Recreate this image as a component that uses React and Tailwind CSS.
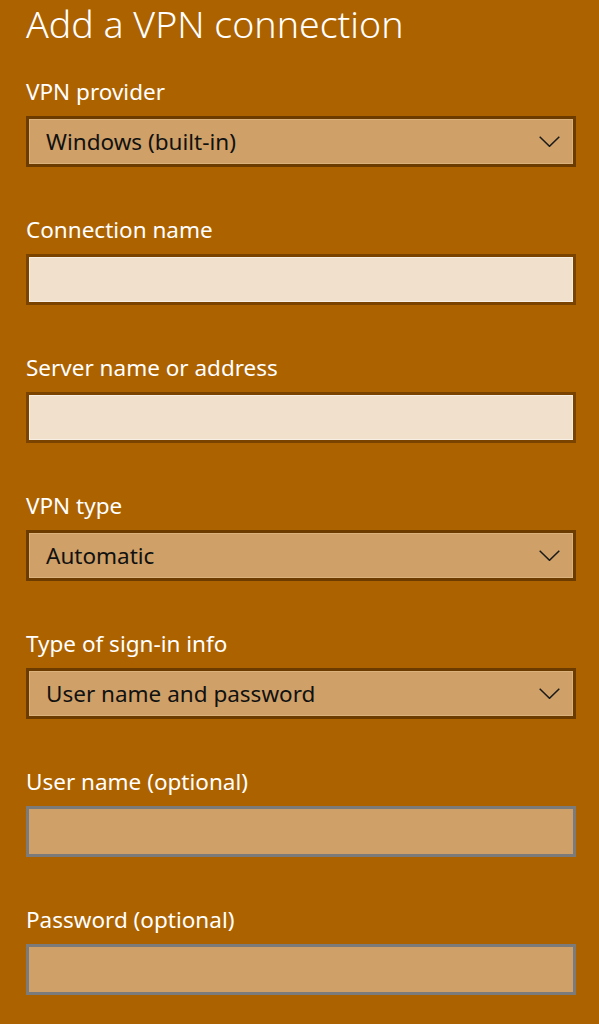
import React from 'react';

const FONT = { fontFamily: '"Noto Sans", "Open Sans", sans-serif' };

function Chevron() {
  return (
    <svg width="21" height="11" viewBox="0 0 21 11" fill="none" className="shrink-0">
      <polyline points="0.7,0.7 10.5,10.3 20.3,0.7" stroke="#1a1a1a" strokeWidth="1.5" />
    </svg>
  );
}

function Label({ children }) {
  return <div className="text-[22.5px] leading-[28px] text-white mb-[10px]">{children}</div>;
}

function Select({ label, value }) {
  return (
    <div className="mb-[49px]">
      <Label>{label}</Label>
      <div className="flex h-[51px] items-center justify-between border-[3px] border-[#6b3b00] bg-[#cfa067] pl-[17px] pr-[13px] shadow-[inset_0_0_0_1px_#dcb27c]">
        <span className="text-[22.5px] text-[#111]">{value}</span>
        <Chevron />
      </div>
    </div>
  );
}

function TextField({ label, light }) {
  return (
    <div className="mb-[49px]">
      <Label>{label}</Label>
      {light ? (
        <div className="h-[51px] border-[3px] border-[#7a4400] bg-[#f0e0cc] shadow-[inset_0_0_0_1px_#f8efe4]" />
      ) : (
        <div className="h-[51px] border-[3px] border-[#7b7b7b] bg-[#cfa067]" />
      )}
    </div>
  );
}

export default function App() {
  return (
    <div className="min-h-screen bg-[#ad6200] pl-[26px] pr-[23px]" style={FONT}>
      <h1 className="text-[37.5px] font-light leading-[48px] text-white mb-[30px]">Add a VPN connection</h1>
      <Select label="VPN provider" value="Windows (built-in)" />
      <TextField label="Connection name" light />
      <TextField label="Server name or address" light />
      <Select label="VPN type" value="Automatic" />
      <Select label="Type of sign-in info" value="User name and password" />
      <TextField label="User name (optional)" />
      <TextField label="Password (optional)" />
    </div>
  );
}
